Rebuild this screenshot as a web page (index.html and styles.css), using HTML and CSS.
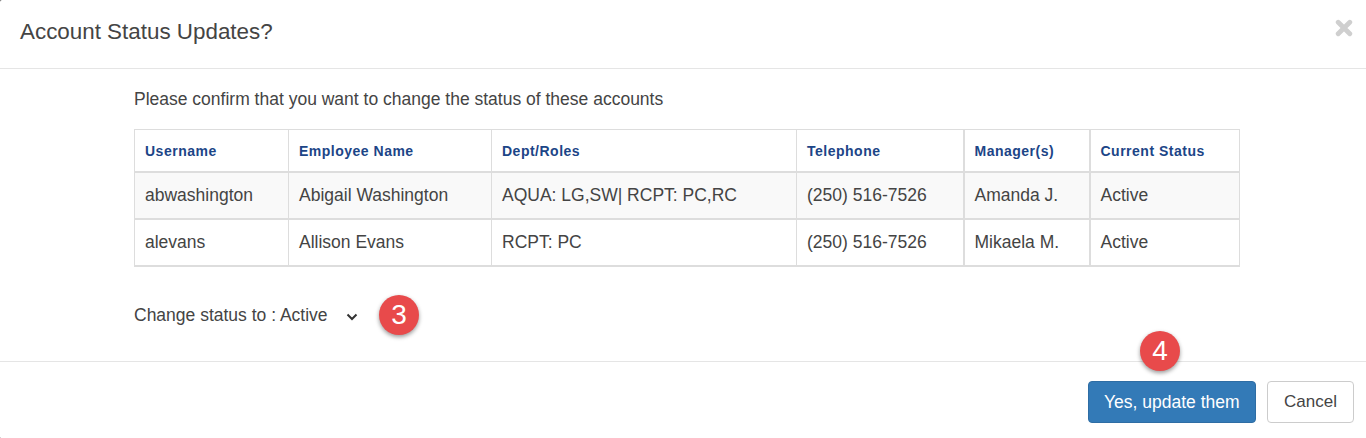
FILE: index.html
```html
<!DOCTYPE html>
<html lang="en">
<head>
  <meta charset="UTF-8">
  <meta name="viewport" content="width=device-width, initial-scale=1.0">
  <title>Account Status Updates</title>
  <link rel="stylesheet" href="styles.css">
</head>

<body>
  <div class="modal">
    <div class="modal-header">
      <h4>Account Status Updates?</h4>
      <svg class="close-icon" width="18" height="18" viewBox="0 0 18 18" aria-label="Close">
        <path d="M3.2 3.2 14.8 14.8M14.8 3.2 3.2 14.8" stroke="#cfcfcf" stroke-width="4.8" stroke-linecap="round"/>
      </svg>
    </div>

    <div class="modal-body">
      <p class="intro">Please confirm that you want to change the status of these accounts</p>

      <table class="accounts">
        <colgroup>
          <col class="col-user">
          <col class="col-name">
          <col class="col-dept">
          <col class="col-phone">
          <col class="col-manager">
          <col class="col-status">
        </colgroup>
        <thead>
          <tr>
            <th>Username</th>
            <th>Employee Name</th>
            <th>Dept/Roles</th>
            <th>Telephone</th>
            <th>Manager(s)</th>
            <th>Current Status</th>
          </tr>
        </thead>
        <tbody>
          <tr class="striped">
            <td>abwashington</td>
            <td>Abigail Washington</td>
            <td>AQUA: LG,SW| RCPT: PC,RC</td>
            <td>(250) 516-7526</td>
            <td>Amanda J.</td>
            <td>Active</td>
          </tr>
          <tr>
            <td>alevans</td>
            <td>Allison Evans</td>
            <td>RCPT: PC</td>
            <td>(250) 516-7526</td>
            <td>Mikaela M.</td>
            <td>Active</td>
          </tr>
        </tbody>
      </table>

      <div class="status-row">
        <span>Change status to : Active</span>
        <svg class="chevron" width="12" height="8" viewBox="0 0 12 8">
          <path d="M1.5 1.5 6 6 10.5 1.5" fill="none" stroke="#333" stroke-width="2"/>
        </svg>
      </div>
      <span class="badge badge-three">3</span>
    </div>

    <div class="modal-footer">
      <button class="btn btn-primary">Yes, update them</button>
      <button class="btn btn-default">Cancel</button>
      <span class="badge badge-four">4</span>
    </div>
  </div>
</body>
</html>
```

FILE: styles.css
```css
html, body {
  margin: 0;
  height: 100%;
}

body {
  font-family: "Liberation Sans", Arial, sans-serif;
  color: #444;
  background-color: #555;
  overflow: hidden;
}

.modal {
  height: 438px;
  box-sizing: border-box;
  background-color: #fff;
  border-radius: 2px 0 0 1px;
  display: flex;
  flex-direction: column;
}

.modal-header {
  height: 69px;
  box-sizing: border-box;
  padding: 0 13px 4px 20px;
  border-bottom: 1px solid #e5e5e5;
  display: flex;
  justify-content: space-between;
  align-items: center;
}

.modal-header h4 {
  margin: 0;
  font-size: 22.4px;
  font-weight: 400;
  line-height: 26px;
}

.close-icon {
  margin-bottom: 9px;
}

.modal-body {
  position: relative;
  flex: 1;
  padding: 21px 126px 0 134px;
}

.intro {
  margin: 0 0 20px;
  font-size: 17.5px;
  line-height: 19px;
}

.accounts {
  width: 1106px;
  table-layout: fixed;
  border-collapse: collapse;
  font-size: 17.5px;
}

.col-user { width: 154px; }
.col-name { width: 203px; }
.col-dept { width: 305px; }
.col-phone { width: 167px; }
.col-manager { width: 126px; }
.col-status { width: 150px; }

.accounts th,
.accounts td {
  border: 1px solid #ddd;
  padding: 0 10px;
  text-align: left;
}

.accounts th {
  height: 41px;
  color: #1c4587;
  font-size: 14px;
  font-weight: 700;
  letter-spacing: 0.5px;
  border-bottom-width: 2px;
}

.accounts td {
  height: 45px;
  border-bottom-width: 2px;
}

.accounts th:nth-child(5),
.accounts td:nth-child(5) {
  border-left-width: 2px;
}

.accounts th:nth-child(6),
.accounts td:nth-child(6) {
  border-left-width: 2px;
}

.striped td {
  background-color: #f9f9f9;
}

.status-row {
  margin-top: 38px;
  display: flex;
  align-items: center;
  gap: 18px;
  font-size: 17.5px;
  line-height: 20px;
}

.chevron {
  margin-top: 4px;
}

.badge {
  position: absolute;
  width: 40px;
  height: 40px;
  border-radius: 50%;
  background-color: #e84a4b;
  color: #fff;
  font-size: 28px;
  line-height: 40px;
  text-align: center;
  box-shadow: 0 2px 4px rgba(0, 0, 0, 0.4);
}

.badge-three {
  left: 379px;
  top: 226px;
}

.badge-four {
  left: 1140px;
  top: -31px;
}

.modal-footer {
  position: relative;
  height: 77px;
  box-sizing: border-box;
  padding: 19px 12px 0 0;
  border-top: 1px solid #e5e5e5;
  display: flex;
  justify-content: flex-end;
  align-items: flex-start;
  gap: 11px;
}

.btn {
  height: 42px;
  font-family: inherit;
  border-radius: 4px;
  border: 1px solid transparent;
}

.btn-primary {
  padding: 0 15.5px;
  font-size: 17.5px;
  background-color: #337ab7;
  border-color: #2e6da4;
  color: #fff;
}

.btn-default {
  padding: 0 16px;
  font-size: 17px;
  background-color: #fff;
  border-color: #ccc;
  color: #444;
}
```
